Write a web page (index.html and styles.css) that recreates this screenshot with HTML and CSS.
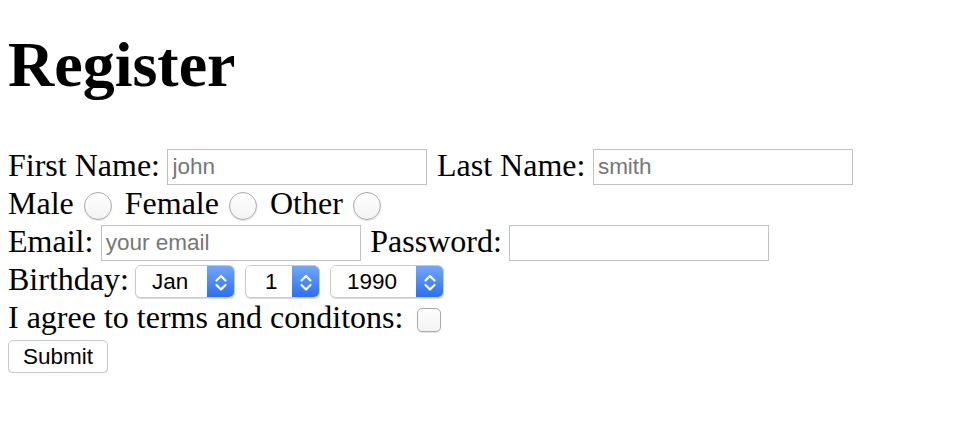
FILE: index.html
```html
<!DOCTYPE html>
<html lang="en">
<head>
<meta charset="utf-8">
<title>Register</title>
<link rel="stylesheet" href="styles.css">
</head>
<body>
<h1 class="title">Register</h1>
<form class="form">
  <div class="row">
    <label class="label" for="first">First Name:</label>
    <input class="field" id="first" type="text" placeholder="john">
    <label class="label" for="last">Last Name:</label>
    <input class="field" id="last" type="text" placeholder="smith">
  </div>
  <div class="row">
    <label class="label" for="male">Male</label>
    <input class="radio" id="male" type="radio" name="gender">
    <label class="label" for="female">Female</label>
    <input class="radio" id="female" type="radio" name="gender">
    <label class="label" for="other">Other</label>
    <input class="radio" id="other" type="radio" name="gender">
  </div>
  <div class="row">
    <label class="label" for="email">Email:</label>
    <input class="field" id="email" type="email" placeholder="your email">
    <label class="label" for="pass">Password:</label>
    <input class="field" id="pass" type="password">
  </div>
  <div class="row row-select">
    <span class="label">Birthday:</span>
    <span class="select select-month">
      <select class="select-box"><option>Jan</option><option>Feb</option><option>Mar</option></select>
      <span class="select-arrow"><svg width="28" height="33" viewBox="0 0 28 33"><polyline points="9.5,14.5 14,10 18.5,14.5" fill="none" stroke="#fff" stroke-width="2.2" stroke-linecap="round" stroke-linejoin="round"/><polyline points="9.5,19 14,23.5 18.5,19" fill="none" stroke="#fff" stroke-width="2.2" stroke-linecap="round" stroke-linejoin="round"/></svg></span>
    </span>
    <span class="select select-day">
      <select class="select-box"><option>1</option><option>2</option><option>3</option></select>
      <span class="select-arrow"><svg width="28" height="33" viewBox="0 0 28 33"><polyline points="9.5,14.5 14,10 18.5,14.5" fill="none" stroke="#fff" stroke-width="2.2" stroke-linecap="round" stroke-linejoin="round"/><polyline points="9.5,19 14,23.5 18.5,19" fill="none" stroke="#fff" stroke-width="2.2" stroke-linecap="round" stroke-linejoin="round"/></svg></span>
    </span>
    <span class="select select-year">
      <select class="select-box"><option>1990</option><option>1991</option><option>1992</option></select>
      <span class="select-arrow"><svg width="28" height="33" viewBox="0 0 28 33"><polyline points="9.5,14.5 14,10 18.5,14.5" fill="none" stroke="#fff" stroke-width="2.2" stroke-linecap="round" stroke-linejoin="round"/><polyline points="9.5,19 14,23.5 18.5,19" fill="none" stroke="#fff" stroke-width="2.2" stroke-linecap="round" stroke-linejoin="round"/></svg></span>
    </span>
  </div>
  <div class="row row-check">
    <label class="label" for="agree">I agree to terms and conditons:</label>
    <input class="check" id="agree" type="checkbox">
  </div>
  <div class="row-submit">
    <button class="submit" type="submit">Submit</button>
  </div>
</form>
</body>
</html>
```

FILE: styles.css
```css
html, body {
  background: #fff;
}

body {
  margin: 8px;
  font-family: "Liberation Serif", "Times New Roman", serif;
  font-size: 32px;
  color: #000;
}

.title {
  font-size: 64px;
  font-weight: bold;
  margin: 20px 0 46px;
  line-height: normal;
}

.form {
  display: flex;
  flex-direction: column;
}

.row {
  display: flex;
  align-items: center;
  height: 38px;
  gap: 7.5px;
}

.label {
  line-height: 32px;
  margin-bottom: 5px;
  white-space: nowrap;
}

.field {
  box-sizing: border-box;
  width: 260px;
  height: 36px;
  margin: 0 2px 0 0;
  padding: 0 4px;
  border: 1px solid #c2c2c2;
  border-radius: 0;
  background: #fff;
  font-family: "Liberation Sans", Arial, sans-serif;
  font-size: 22.5px;
  color: #000;
  outline: none;
}

.field::placeholder {
  color: #777;
}

.radio {
  appearance: none;
  -webkit-appearance: none;
  box-sizing: border-box;
  width: 28px;
  height: 28px;
  margin: 1px 5px 0 3px;
  border: 1px solid #a9a9a9;
  border-radius: 50%;
  background: linear-gradient(#ffffff, #f3f3f3);
  box-shadow: 0 1px 1px rgba(0, 0, 0, 0.12);
}

.row-select {
  gap: 6px;
}

.select {
  display: inline-flex;
  box-sizing: border-box;
  height: 33px;
  border: 1px solid #c9c9c9;
  border-radius: 6px;
  overflow: hidden;
  background: #fff;
  box-shadow: 0 1px 1px rgba(0, 0, 0, 0.15);
}

.select + .select {
  margin-left: 4px;
}

.select-month {
  width: 100px;
}

.select-day {
  width: 75px;
}

.select-year {
  width: 114px;
}

.select-box {
  appearance: none;
  -webkit-appearance: none;
  flex: 1;
  min-width: 0;
  border: none;
  background: #fff;
  padding: 0 0 0 16px;
  margin: 0;
  font-family: "Liberation Sans", Arial, sans-serif;
  font-size: 22.5px;
  color: #000;
  outline: none;
}

.select-day .select-box {
  padding-left: 19px;
}

.select-arrow {
  display: flex;
  width: 28px;
  flex: none;
  background: linear-gradient(#71aafb, #2a6df0);
  margin: -1px -1px -1px 0;
}

.select-arrow svg {
  display: block;
  margin-top: 1px;
}

.row-check {
  height: 39px;
  gap: 14px;
}

.check {
  appearance: none;
  -webkit-appearance: none;
  box-sizing: border-box;
  width: 24px;
  height: 24px;
  margin: 1px 0 0;
  border: 1px solid #aaa;
  border-radius: 5px;
  background: linear-gradient(#fdfdfd, #f3f3f3);
  box-shadow: 0 1px 1px rgba(0, 0, 0, 0.12);
}

.row-submit {
  display: flex;
  margin-top: 1px;
}

.submit {
  box-sizing: border-box;
  width: 100px;
  height: 33px;
  margin: 0;
  padding: 0;
  border: 1px solid #c9c9c9;
  border-radius: 5px;
  background: #fff;
  box-shadow: 0 1px 1px rgba(0, 0, 0, 0.15);
  font-family: "Liberation Sans", Arial, sans-serif;
  font-size: 22.5px;
  color: #000;
}
```
